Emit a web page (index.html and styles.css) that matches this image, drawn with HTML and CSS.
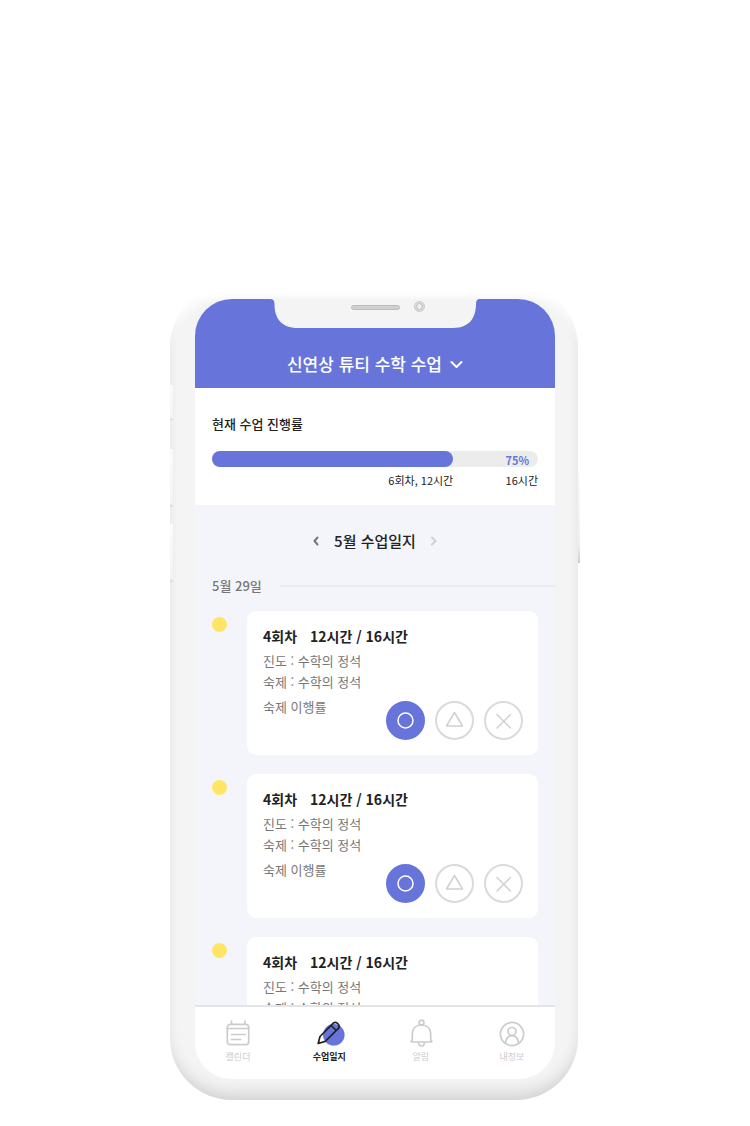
FILE: index.html
```html
<!DOCTYPE html>
<html lang="ko">
<head>
<meta charset="utf-8">
<meta name="viewport" content="width=device-width, initial-scale=1">
<title>수업일지</title>
<link rel="stylesheet" href="styles.css">
</head>
<body>
<svg class="sprite" aria-hidden="true">
  <symbol id="i-circle" viewBox="0 0 39 39"><circle cx="19.500" cy="19.500" r="7.500"/></symbol>
  <symbol id="i-triangle" viewBox="0 0 39 39"><path d="M19.500 11.500 L27.500 25 H11.500 Z"/></symbol>
  <symbol id="i-cross" viewBox="0 0 39 39"><path d="M13 13.500 L26.500 27 M26.500 13.500 L13 27"/></symbol>
</svg>
<div class="phone">
  <span class="side side-mute"></span>
  <span class="side side-up"></span>
  <span class="side side-down"></span>
  <span class="side side-power"></span>
  <div class="screen">
    <svg class="notch" viewBox="0 0 208 29" aria-hidden="true">
      <path class="notch-shape" d="M0 0 Q3.500 .5 3.500 5 C3.500 19 10 29 27 29 H182 C199 29 205 18 205 5 Q205 .5 208 0 Z"/>
      <rect class="speaker" x="80.500" y="6.500" width="48" height="4" rx="2"/>
      <circle class="lens" cx="148.500" cy="7.500" r="5"/>
      <circle class="lens-core" cx="148.500" cy="7.500" r="3"/>
    </svg>
    <header class="header">
      <button class="course" type="button">
        <span>신연상 튜티 수학 수업</span>
        <svg width="13" height="9" viewBox="0 0 13 9" aria-hidden="true"><path d="M1.500 2 L6.500 7 L11.500 2"/></svg>
      </button>
    </header>
    <main class="content">
      <section class="progress">
        <h2 class="progress-title">현재 수업 진행률</h2>
        <div class="bar"><div class="bar-fill"></div><span class="bar-value">75%</span></div>
        <div class="bar-labels"><span class="done">6회차, 12시간</span><span>16시간</span></div>
      </section>
      <section class="log">
        <div class="month">
          <button class="arrow" type="button" aria-label="이전 달"><svg width="7" height="10" viewBox="0 0 7 10"><path d="M5.500 1.500 L2.500 5 L5.500 8.500"/></svg></button>
          <h2 class="month-title">5월 수업일지</h2>
          <button class="arrow arrow-off" type="button" aria-label="다음 달"><svg width="7" height="10" viewBox="0 0 7 10"><path d="M1 1.500 L4.500 5 L1 8.500"/></svg></button>
        </div>
        <h3 class="date">5월 29일</h3>
        <ul class="entries">
          <li class="entry">
            <article class="card">
              <h4 class="card-title"><span>4회차</span><span>12시간 / 16시간</span></h4>
              <p class="line">진도 : 수학의 정석</p>
              <p class="line">숙제 : 수학의 정석</p>
              <div class="rate">
                <span class="rate-label">숙제 이행률</span>
                <div class="marks">
                  <button class="mark mark-on" type="button" aria-label="완료" aria-pressed="true"><svg><use href="#i-circle"/></svg></button>
                  <button class="mark" type="button" aria-label="일부"><svg><use href="#i-triangle"/></svg></button>
                  <button class="mark" type="button" aria-label="미완료"><svg><use href="#i-cross"/></svg></button>
                </div>
              </div>
            </article>
          </li>
          <li class="entry">
            <article class="card">
              <h4 class="card-title"><span>4회차</span><span>12시간 / 16시간</span></h4>
              <p class="line">진도 : 수학의 정석</p>
              <p class="line">숙제 : 수학의 정석</p>
              <div class="rate">
                <span class="rate-label">숙제 이행률</span>
                <div class="marks">
                  <button class="mark mark-on" type="button" aria-label="완료" aria-pressed="true"><svg><use href="#i-circle"/></svg></button>
                  <button class="mark" type="button" aria-label="일부"><svg><use href="#i-triangle"/></svg></button>
                  <button class="mark" type="button" aria-label="미완료"><svg><use href="#i-cross"/></svg></button>
                </div>
              </div>
            </article>
          </li>
          <li class="entry">
            <article class="card">
              <h4 class="card-title"><span>4회차</span><span>12시간 / 16시간</span></h4>
              <p class="line">진도 : 수학의 정석</p>
              <p class="line">숙제 : 수학의 정석</p>
            </article>
          </li>
        </ul>
      </section>
    </main>
    <nav class="tabs">
      <a class="tab" href="#calendar">
        <svg viewBox="0 0 28 28" aria-hidden="true"><rect x="3.300" y="4.300" width="21.400" height="20.400" rx="3"/><path d="M7.500 1.200 V4 M21 1.200 V4 M3.300 8.500 H24.700 M7.500 14.500 H21.200 M7.500 19.500 H16.500"/></svg>
        <span>캘린더</span>
      </a>
      <a class="tab tab-on" href="#log" aria-current="page">
        <svg viewBox="0 0 28 28" aria-hidden="true"><circle class="blob" cx="18.800" cy="14.800" r="10.800"/><path d="M3.200 23.500 L5 16.500 L18.300 3.200 Q20.300 1.500 22.500 3.300 L23.300 4.200 Q25.200 6.300 23.400 8.300 L10.200 21.400 Z M16 5.500 L21.300 10.500"/></svg>
        <span>수업일지</span>
      </a>
      <a class="tab" href="#alerts">
        <svg viewBox="0 0 28 28" aria-hidden="true"><circle cx="14.500" cy="2.600" r="2.400"/><path d="M5.300 19 V14 C5.300 8.500 9 5 14.500 5 C20 5 23.700 8.500 23.700 14 V19 Q23.700 20.500 24.700 21 Q25 22 24 22 H5 Q4 22 4.300 21 Q5.300 20.500 5.300 19 M11.500 22 Q11.500 26 14.500 26 Q17.500 26 17.500 22"/></svg>
        <span>알림</span>
      </a>
      <a class="tab" href="#profile">
        <svg viewBox="0 0 28 28" aria-hidden="true"><circle cx="14" cy="14" r="11.600"/><circle cx="14" cy="11.500" r="4"/><path d="M7.300 23.200 C8 18.500 10.500 15.700 14 15.700 C17.500 15.700 20 18.500 20.700 23.200"/></svg>
        <span>내정보</span>
      </a>
    </nav>
  </div>
</div>
</body>
</html>
```

FILE: styles.css
```css
* { box-sizing: border-box; margin: 0; padding: 0; }

body {
  min-height: 100vh;
  padding: 285px 0 26px;
  display: flex;
  justify-content: center;
  background: #fff;
  color: #222;
  font-family: "Noto Sans CJK KR", sans-serif;
}

button { border: 0; background: none; font: inherit; color: inherit; cursor: pointer; }
svg { fill: none; stroke: currentColor; stroke-linecap: round; stroke-linejoin: round; }
.sprite { position: absolute; width: 0; height: 0; }

.phone {
  position: relative;
  width: 100%;
  max-width: 408px;
  margin-right: 2px;
  padding: 14px 23px 21px 25px;
  border-radius: 62px;
  background: linear-gradient(#fff 4px, #f4f4f4 18px);
  box-shadow: inset 0 -14px 16px -8px #d0d0d0, inset 0 12px 10px -4px #fff, inset -6px 0 8px -4px #ebebeb, inset 5px 0 6px -4px #ededed;
}

.side { position: absolute; left: 0; width: 3px; background: linear-gradient(#fbfbfb, #f3f3f3 94%, #d6d6d6); }
.side-mute { top: 100px; height: 35px; }
.side-up { top: 164px; height: 58px; }
.side-down { top: 239px; height: 58px; }
.side-power { left: auto; right: -2px; top: 188px; width: 2px; height: 90px; background: linear-gradient(#fafafa, #eee 80%, #ccc); }

.screen {
  position: relative;
  display: flex;
  flex-direction: column;
  aspect-ratio: 360 / 780;
  overflow: hidden;
  border-radius: 37px;
  background: #fff;
}

.notch { position: absolute; top: 0; left: 76px; width: 208px; height: 29px; }
.notch-shape { fill: #f4f4f4; stroke: none; }
.speaker { fill: #d0d0d0; stroke: #bcbcbc; stroke-width: 1; }
.lens { fill: #dedede; stroke: #c8c8c8; stroke-width: 1; }
.lens-core { fill: #f0f0f0; stroke: #bcbcbc; stroke-width: 1; }

.header {
  display: flex;
  justify-content: center;
  padding: 53px 16px 12px;
  background: #6775db;
  color: #fff;
}
.course { display: flex; align-items: center; gap: 8px; font-size: 17px; font-weight: 500; line-height: 24px; }
.course svg { stroke-width: 2; }

.content { flex: 1; min-height: 0; overflow: hidden; background: #f4f5fa; }

.progress { padding: 26px 17px 17px; background: #fff; }
.progress-title { font-size: 13px; font-weight: 500; line-height: 20px; }
.bar {
  display: flex;
  justify-content: space-between;
  margin-top: 17px;
  height: 16px;
  border-radius: 8px;
  background: #ececec;
}
.bar-fill { width: 74%; border-radius: 8px; background: #6775db; }
.bar-value { padding-right: 9px; color: #6775db; font-size: 11px; font-weight: 700; line-height: 18px; }
.bar-labels { display: flex; justify-content: space-between; margin-top: 5px; font-size: 11px; line-height: 16px; }
.done { width: 74%; text-align: right; }

.log { padding-top: 24px; }
.month { display: flex; justify-content: center; align-items: center; gap: 15px; }
.month-title { font-size: 15px; font-weight: 500; line-height: 24px; }
.arrow { display: flex; color: #777; }
.arrow-off { color: #d0d0d0; }
.arrow svg { stroke-width: 2; }
.date {
  display: flex;
  align-items: center;
  gap: 18px;
  margin-top: 23px;
  padding-left: 17px;
  color: #777;
  font-size: 13px;
  font-weight: 500;
  line-height: 20px;
}
.date::after { content: ""; flex: 1; height: 2px; background: #ebebee; }

.entries { display: grid; gap: 19px; margin-top: 15px; padding: 0 17px; list-style: none; }
.entry { display: flex; gap: 20px; }
.entry::before { content: ""; width: 15px; height: 15px; margin-top: 6px; border-radius: 50%; background: #ffe566; }
.card { flex: 1; padding: 14px 15px 15px 16px; border-radius: 9px; background: #fff; }
.card-title { display: flex; gap: 13px; margin-bottom: 3px; font-size: 14px; font-weight: 700; line-height: 22px; }
.line, .rate-label { color: #777; font-size: 13px; line-height: 21px; }
.rate { display: flex; justify-content: space-between; margin-top: 4px; }
.marks { display: flex; gap: 10px; margin-top: 5px; }
.mark { width: 39px; height: 39px; border: 2px solid #dadada; border-radius: 50%; color: #d0d0d0; }
.mark svg { display: block; width: 39px; height: 39px; margin: -2px; stroke-width: 1.5px; }
.mark-on { border-color: #6775db; background: #6775db; color: #fff; }

.tabs {
  display: flex;
  justify-content: space-between;
  padding: 13px 16px 15px;
  border-top: 2px solid #e3e4e8;
  background: #fff;
}
.tab {
  display: flex;
  flex-direction: column;
  align-items: center;
  gap: 2px;
  width: 54px;
  color: #ccc;
  font-size: 9px;
  line-height: 14px;
  text-decoration: none;
}
.tab svg { width: 28px; height: 28px; stroke-width: 1.7px; overflow: visible; }
.tab-on { color: #222; font-weight: 700; }
.blob { fill: #6775db; stroke: none; }
```
